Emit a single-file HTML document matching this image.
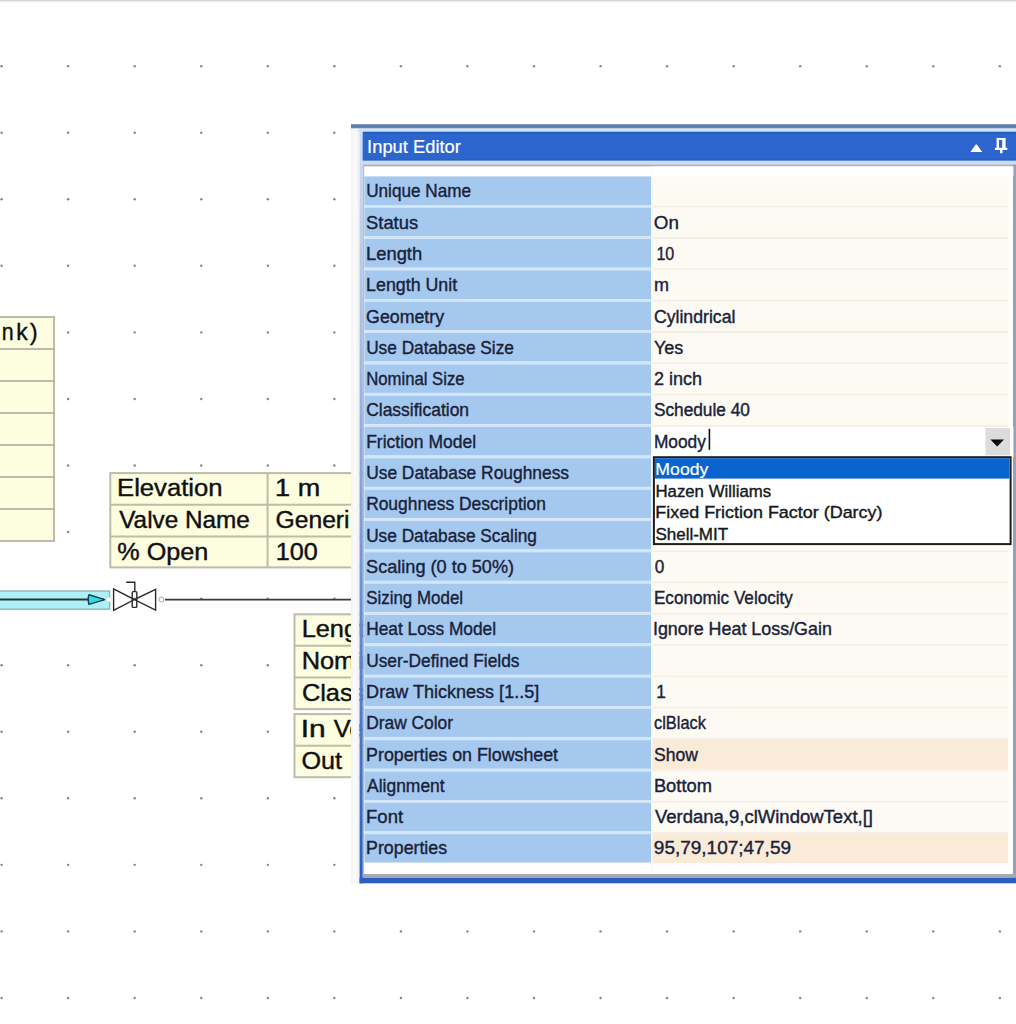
<!DOCTYPE html><html><head><meta charset="utf-8"><style>html,body{margin:0;padding:0;background:#fff;overflow:hidden;width:1016px;height:1024px}svg{display:block}text{font-family:"Liberation Sans",sans-serif}</style></head><body><svg width="1016" height="1024" viewBox="0 0 1016 1024"><rect x="0" y="0" width="1016" height="1024" fill="#ffffff"/><rect x="0" y="0" width="1016" height="1.4" fill="#d2d4d9"/><rect x="0" y="1.4" width="1016" height="1" fill="#eceef0"/><g fill="#858585"><circle cx="1.60" cy="66.14" r="1.2"/><circle cx="68.15" cy="66.14" r="1.2"/><circle cx="134.70" cy="66.14" r="1.2"/><circle cx="201.25" cy="66.14" r="1.2"/><circle cx="267.80" cy="66.14" r="1.2"/><circle cx="334.35" cy="66.14" r="1.2"/><circle cx="400.90" cy="66.14" r="1.2"/><circle cx="467.45" cy="66.14" r="1.2"/><circle cx="534.00" cy="66.14" r="1.2"/><circle cx="600.55" cy="66.14" r="1.2"/><circle cx="667.10" cy="66.14" r="1.2"/><circle cx="733.65" cy="66.14" r="1.2"/><circle cx="800.20" cy="66.14" r="1.2"/><circle cx="866.75" cy="66.14" r="1.2"/><circle cx="933.30" cy="66.14" r="1.2"/><circle cx="999.85" cy="66.14" r="1.2"/><circle cx="1.60" cy="132.70" r="1.2"/><circle cx="68.15" cy="132.70" r="1.2"/><circle cx="134.70" cy="132.70" r="1.2"/><circle cx="201.25" cy="132.70" r="1.2"/><circle cx="267.80" cy="132.70" r="1.2"/><circle cx="334.35" cy="132.70" r="1.2"/><circle cx="400.90" cy="132.70" r="1.2"/><circle cx="467.45" cy="132.70" r="1.2"/><circle cx="534.00" cy="132.70" r="1.2"/><circle cx="600.55" cy="132.70" r="1.2"/><circle cx="667.10" cy="132.70" r="1.2"/><circle cx="733.65" cy="132.70" r="1.2"/><circle cx="800.20" cy="132.70" r="1.2"/><circle cx="866.75" cy="132.70" r="1.2"/><circle cx="933.30" cy="132.70" r="1.2"/><circle cx="999.85" cy="132.70" r="1.2"/><circle cx="1.60" cy="199.26" r="1.2"/><circle cx="68.15" cy="199.26" r="1.2"/><circle cx="134.70" cy="199.26" r="1.2"/><circle cx="201.25" cy="199.26" r="1.2"/><circle cx="267.80" cy="199.26" r="1.2"/><circle cx="334.35" cy="199.26" r="1.2"/><circle cx="400.90" cy="199.26" r="1.2"/><circle cx="467.45" cy="199.26" r="1.2"/><circle cx="534.00" cy="199.26" r="1.2"/><circle cx="600.55" cy="199.26" r="1.2"/><circle cx="667.10" cy="199.26" r="1.2"/><circle cx="733.65" cy="199.26" r="1.2"/><circle cx="800.20" cy="199.26" r="1.2"/><circle cx="866.75" cy="199.26" r="1.2"/><circle cx="933.30" cy="199.26" r="1.2"/><circle cx="999.85" cy="199.26" r="1.2"/><circle cx="1.60" cy="265.82" r="1.2"/><circle cx="68.15" cy="265.82" r="1.2"/><circle cx="134.70" cy="265.82" r="1.2"/><circle cx="201.25" cy="265.82" r="1.2"/><circle cx="267.80" cy="265.82" r="1.2"/><circle cx="334.35" cy="265.82" r="1.2"/><circle cx="400.90" cy="265.82" r="1.2"/><circle cx="467.45" cy="265.82" r="1.2"/><circle cx="534.00" cy="265.82" r="1.2"/><circle cx="600.55" cy="265.82" r="1.2"/><circle cx="667.10" cy="265.82" r="1.2"/><circle cx="733.65" cy="265.82" r="1.2"/><circle cx="800.20" cy="265.82" r="1.2"/><circle cx="866.75" cy="265.82" r="1.2"/><circle cx="933.30" cy="265.82" r="1.2"/><circle cx="999.85" cy="265.82" r="1.2"/><circle cx="1.60" cy="332.38" r="1.2"/><circle cx="68.15" cy="332.38" r="1.2"/><circle cx="134.70" cy="332.38" r="1.2"/><circle cx="201.25" cy="332.38" r="1.2"/><circle cx="267.80" cy="332.38" r="1.2"/><circle cx="334.35" cy="332.38" r="1.2"/><circle cx="400.90" cy="332.38" r="1.2"/><circle cx="467.45" cy="332.38" r="1.2"/><circle cx="534.00" cy="332.38" r="1.2"/><circle cx="600.55" cy="332.38" r="1.2"/><circle cx="667.10" cy="332.38" r="1.2"/><circle cx="733.65" cy="332.38" r="1.2"/><circle cx="800.20" cy="332.38" r="1.2"/><circle cx="866.75" cy="332.38" r="1.2"/><circle cx="933.30" cy="332.38" r="1.2"/><circle cx="999.85" cy="332.38" r="1.2"/><circle cx="1.60" cy="398.94" r="1.2"/><circle cx="68.15" cy="398.94" r="1.2"/><circle cx="134.70" cy="398.94" r="1.2"/><circle cx="201.25" cy="398.94" r="1.2"/><circle cx="267.80" cy="398.94" r="1.2"/><circle cx="334.35" cy="398.94" r="1.2"/><circle cx="400.90" cy="398.94" r="1.2"/><circle cx="467.45" cy="398.94" r="1.2"/><circle cx="534.00" cy="398.94" r="1.2"/><circle cx="600.55" cy="398.94" r="1.2"/><circle cx="667.10" cy="398.94" r="1.2"/><circle cx="733.65" cy="398.94" r="1.2"/><circle cx="800.20" cy="398.94" r="1.2"/><circle cx="866.75" cy="398.94" r="1.2"/><circle cx="933.30" cy="398.94" r="1.2"/><circle cx="999.85" cy="398.94" r="1.2"/><circle cx="1.60" cy="465.50" r="1.2"/><circle cx="68.15" cy="465.50" r="1.2"/><circle cx="134.70" cy="465.50" r="1.2"/><circle cx="201.25" cy="465.50" r="1.2"/><circle cx="267.80" cy="465.50" r="1.2"/><circle cx="334.35" cy="465.50" r="1.2"/><circle cx="400.90" cy="465.50" r="1.2"/><circle cx="467.45" cy="465.50" r="1.2"/><circle cx="534.00" cy="465.50" r="1.2"/><circle cx="600.55" cy="465.50" r="1.2"/><circle cx="667.10" cy="465.50" r="1.2"/><circle cx="733.65" cy="465.50" r="1.2"/><circle cx="800.20" cy="465.50" r="1.2"/><circle cx="866.75" cy="465.50" r="1.2"/><circle cx="933.30" cy="465.50" r="1.2"/><circle cx="999.85" cy="465.50" r="1.2"/><circle cx="1.60" cy="532.06" r="1.2"/><circle cx="68.15" cy="532.06" r="1.2"/><circle cx="134.70" cy="532.06" r="1.2"/><circle cx="201.25" cy="532.06" r="1.2"/><circle cx="267.80" cy="532.06" r="1.2"/><circle cx="334.35" cy="532.06" r="1.2"/><circle cx="400.90" cy="532.06" r="1.2"/><circle cx="467.45" cy="532.06" r="1.2"/><circle cx="534.00" cy="532.06" r="1.2"/><circle cx="600.55" cy="532.06" r="1.2"/><circle cx="667.10" cy="532.06" r="1.2"/><circle cx="733.65" cy="532.06" r="1.2"/><circle cx="800.20" cy="532.06" r="1.2"/><circle cx="866.75" cy="532.06" r="1.2"/><circle cx="933.30" cy="532.06" r="1.2"/><circle cx="999.85" cy="532.06" r="1.2"/><circle cx="1.60" cy="598.62" r="1.2"/><circle cx="68.15" cy="598.62" r="1.2"/><circle cx="134.70" cy="598.62" r="1.2"/><circle cx="201.25" cy="598.62" r="1.2"/><circle cx="267.80" cy="598.62" r="1.2"/><circle cx="334.35" cy="598.62" r="1.2"/><circle cx="400.90" cy="598.62" r="1.2"/><circle cx="467.45" cy="598.62" r="1.2"/><circle cx="534.00" cy="598.62" r="1.2"/><circle cx="600.55" cy="598.62" r="1.2"/><circle cx="667.10" cy="598.62" r="1.2"/><circle cx="733.65" cy="598.62" r="1.2"/><circle cx="800.20" cy="598.62" r="1.2"/><circle cx="866.75" cy="598.62" r="1.2"/><circle cx="933.30" cy="598.62" r="1.2"/><circle cx="999.85" cy="598.62" r="1.2"/><circle cx="1.60" cy="665.18" r="1.2"/><circle cx="68.15" cy="665.18" r="1.2"/><circle cx="134.70" cy="665.18" r="1.2"/><circle cx="201.25" cy="665.18" r="1.2"/><circle cx="267.80" cy="665.18" r="1.2"/><circle cx="334.35" cy="665.18" r="1.2"/><circle cx="400.90" cy="665.18" r="1.2"/><circle cx="467.45" cy="665.18" r="1.2"/><circle cx="534.00" cy="665.18" r="1.2"/><circle cx="600.55" cy="665.18" r="1.2"/><circle cx="667.10" cy="665.18" r="1.2"/><circle cx="733.65" cy="665.18" r="1.2"/><circle cx="800.20" cy="665.18" r="1.2"/><circle cx="866.75" cy="665.18" r="1.2"/><circle cx="933.30" cy="665.18" r="1.2"/><circle cx="999.85" cy="665.18" r="1.2"/><circle cx="1.60" cy="731.74" r="1.2"/><circle cx="68.15" cy="731.74" r="1.2"/><circle cx="134.70" cy="731.74" r="1.2"/><circle cx="201.25" cy="731.74" r="1.2"/><circle cx="267.80" cy="731.74" r="1.2"/><circle cx="334.35" cy="731.74" r="1.2"/><circle cx="400.90" cy="731.74" r="1.2"/><circle cx="467.45" cy="731.74" r="1.2"/><circle cx="534.00" cy="731.74" r="1.2"/><circle cx="600.55" cy="731.74" r="1.2"/><circle cx="667.10" cy="731.74" r="1.2"/><circle cx="733.65" cy="731.74" r="1.2"/><circle cx="800.20" cy="731.74" r="1.2"/><circle cx="866.75" cy="731.74" r="1.2"/><circle cx="933.30" cy="731.74" r="1.2"/><circle cx="999.85" cy="731.74" r="1.2"/><circle cx="1.60" cy="798.30" r="1.2"/><circle cx="68.15" cy="798.30" r="1.2"/><circle cx="134.70" cy="798.30" r="1.2"/><circle cx="201.25" cy="798.30" r="1.2"/><circle cx="267.80" cy="798.30" r="1.2"/><circle cx="334.35" cy="798.30" r="1.2"/><circle cx="400.90" cy="798.30" r="1.2"/><circle cx="467.45" cy="798.30" r="1.2"/><circle cx="534.00" cy="798.30" r="1.2"/><circle cx="600.55" cy="798.30" r="1.2"/><circle cx="667.10" cy="798.30" r="1.2"/><circle cx="733.65" cy="798.30" r="1.2"/><circle cx="800.20" cy="798.30" r="1.2"/><circle cx="866.75" cy="798.30" r="1.2"/><circle cx="933.30" cy="798.30" r="1.2"/><circle cx="999.85" cy="798.30" r="1.2"/><circle cx="1.60" cy="864.86" r="1.2"/><circle cx="68.15" cy="864.86" r="1.2"/><circle cx="134.70" cy="864.86" r="1.2"/><circle cx="201.25" cy="864.86" r="1.2"/><circle cx="267.80" cy="864.86" r="1.2"/><circle cx="334.35" cy="864.86" r="1.2"/><circle cx="400.90" cy="864.86" r="1.2"/><circle cx="467.45" cy="864.86" r="1.2"/><circle cx="534.00" cy="864.86" r="1.2"/><circle cx="600.55" cy="864.86" r="1.2"/><circle cx="667.10" cy="864.86" r="1.2"/><circle cx="733.65" cy="864.86" r="1.2"/><circle cx="800.20" cy="864.86" r="1.2"/><circle cx="866.75" cy="864.86" r="1.2"/><circle cx="933.30" cy="864.86" r="1.2"/><circle cx="999.85" cy="864.86" r="1.2"/><circle cx="1.60" cy="931.42" r="1.2"/><circle cx="68.15" cy="931.42" r="1.2"/><circle cx="134.70" cy="931.42" r="1.2"/><circle cx="201.25" cy="931.42" r="1.2"/><circle cx="267.80" cy="931.42" r="1.2"/><circle cx="334.35" cy="931.42" r="1.2"/><circle cx="400.90" cy="931.42" r="1.2"/><circle cx="467.45" cy="931.42" r="1.2"/><circle cx="534.00" cy="931.42" r="1.2"/><circle cx="600.55" cy="931.42" r="1.2"/><circle cx="667.10" cy="931.42" r="1.2"/><circle cx="733.65" cy="931.42" r="1.2"/><circle cx="800.20" cy="931.42" r="1.2"/><circle cx="866.75" cy="931.42" r="1.2"/><circle cx="933.30" cy="931.42" r="1.2"/><circle cx="999.85" cy="931.42" r="1.2"/><circle cx="1.60" cy="997.98" r="1.2"/><circle cx="68.15" cy="997.98" r="1.2"/><circle cx="134.70" cy="997.98" r="1.2"/><circle cx="201.25" cy="997.98" r="1.2"/><circle cx="267.80" cy="997.98" r="1.2"/><circle cx="334.35" cy="997.98" r="1.2"/><circle cx="400.90" cy="997.98" r="1.2"/><circle cx="467.45" cy="997.98" r="1.2"/><circle cx="534.00" cy="997.98" r="1.2"/><circle cx="600.55" cy="997.98" r="1.2"/><circle cx="667.10" cy="997.98" r="1.2"/><circle cx="733.65" cy="997.98" r="1.2"/><circle cx="800.20" cy="997.98" r="1.2"/><circle cx="866.75" cy="997.98" r="1.2"/><circle cx="933.30" cy="997.98" r="1.2"/><circle cx="999.85" cy="997.98" r="1.2"/></g><rect x="-5" y="317" width="59" height="224" fill="#fdfde0" stroke="#bdbcaa" stroke-width="2"/><line x1="-5" y1="349.00" x2="54" y2="349.00" stroke="#bdbcaa" stroke-width="2"/><line x1="-5" y1="381.00" x2="54" y2="381.00" stroke="#bdbcaa" stroke-width="2"/><line x1="-5" y1="413.00" x2="54" y2="413.00" stroke="#bdbcaa" stroke-width="2"/><line x1="-5" y1="445.00" x2="54" y2="445.00" stroke="#bdbcaa" stroke-width="2"/><line x1="-5" y1="477.00" x2="54" y2="477.00" stroke="#bdbcaa" stroke-width="2"/><line x1="-5" y1="509.00" x2="54" y2="509.00" stroke="#bdbcaa" stroke-width="2"/><rect x="110.3" y="473.1" width="260" height="94.3" fill="#fdfde0" stroke="#bdbcaa" stroke-width="2"/><line x1="110.3" y1="504.8" x2="370" y2="504.8" stroke="#bdbcaa" stroke-width="2"/><line x1="110.3" y1="536.4" x2="370" y2="536.4" stroke="#bdbcaa" stroke-width="2"/><line x1="267.6" y1="473.1" x2="267.6" y2="567.4" stroke="#bdbcaa" stroke-width="2"/><rect x="294.5" y="614.3" width="80" height="94.8" fill="#fdfde0" stroke="#bdbcaa" stroke-width="2"/><line x1="294.5" y1="645.8" x2="370" y2="645.8" stroke="#bdbcaa" stroke-width="2"/><line x1="294.5" y1="677.5" x2="370" y2="677.5" stroke="#bdbcaa" stroke-width="2"/><rect x="294.5" y="714.1" width="80" height="63.1" fill="#fdfde0" stroke="#bdbcaa" stroke-width="2"/><line x1="294.5" y1="745.7" x2="370" y2="745.7" stroke="#bdbcaa" stroke-width="2"/><text transform="translate(1.79,340.10) scale(0.9091,1)" font-size="23.5" fill="#101010" stroke="#101010" stroke-width="0.4" xml:space="preserve">n</text><text transform="translate(16.13,340.10) scale(0.9727,1)" font-size="23.5" fill="#101010" stroke="#101010" stroke-width="0.4" xml:space="preserve">k</text><text transform="translate(30.10,340.10) scale(0.9714,1)" font-size="23.5" fill="#101010" stroke="#101010" stroke-width="0.4" xml:space="preserve">)</text><text transform="translate(117.02,495.70) scale(1.0925,1)" font-size="23.5" fill="#101010" stroke="#101010" stroke-width="0.4" xml:space="preserve">Elevation</text><text transform="translate(119.20,527.90) scale(1.0357,1)" font-size="23.5" fill="#101010" stroke="#101010" stroke-width="0.4" xml:space="preserve">Valve Name</text><text transform="translate(117.33,560.10) scale(1.0723,1)" font-size="23.5" fill="#101010" stroke="#101010" stroke-width="0.4" xml:space="preserve">% Open</text><text transform="translate(275.10,495.70) scale(1.1500,1)" font-size="23.5" fill="#101010" stroke="#101010" stroke-width="0.4" xml:space="preserve">1 m</text><text transform="translate(275.55,527.90) scale(1.0500,1)" font-size="23.5" fill="#101010" stroke="#101010" stroke-width="0.4" xml:space="preserve">Generi</text><text transform="translate(275.65,560.10) scale(1.0730,1)" font-size="23.5" fill="#101010" stroke="#101010" stroke-width="0.4" xml:space="preserve">100</text><text transform="translate(301.64,637.20) scale(1.0800,1)" font-size="23.5" fill="#101010" stroke="#101010" stroke-width="0.4" xml:space="preserve">Length</text><text transform="translate(301.64,669.30) scale(1.0800,1)" font-size="23.5" fill="#101010" stroke="#101010" stroke-width="0.4" xml:space="preserve">Nominal</text><text transform="translate(301.92,701.20) scale(1.0800,1)" font-size="23.5" fill="#101010" stroke="#101010" stroke-width="0.4" xml:space="preserve">Class</text><text transform="translate(300.65,737.30) scale(1.2750,1)" font-size="23.5" fill="#101010" stroke="#101010" stroke-width="0.4" xml:space="preserve">In</text><text transform="translate(333.80,737.30) scale(1.0800,1)" font-size="23.5" fill="#101010" stroke="#101010" stroke-width="0.4" xml:space="preserve">Vel</text><text transform="translate(301.53,769.20) scale(1.0703,1)" font-size="23.5" fill="#101010" stroke="#101010" stroke-width="0.4" xml:space="preserve">Out</text><rect x="-5" y="591" width="114.6" height="18.2" fill="#aef0f8" stroke="#8fb4b8" stroke-width="1.4"/><line x1="0" y1="599.6" x2="104" y2="599.6" stroke="#2a3438" stroke-width="2"/><path d="M89,594.8 C88,597 88,602 89,604.4 L104.8,599.6 Z" fill="#30dce8" stroke="#1e4048" stroke-width="1.5" stroke-linejoin="round"/><circle cx="108.6" cy="599.6" r="2.6" fill="#fff" stroke="#d0d6d6" stroke-width="0.8"/><g fill="#fff" stroke="#2a2a2a" stroke-width="1.4" stroke-linejoin="miter"><path d="M113.6,589 L113.6,610.4 L134.4,599.6 Z"/><path d="M155.6,589.4 L155.6,610.2 L134.4,599.6 Z"/><rect x="132.2" y="591.6" width="4.6" height="15.8" rx="1" fill="none"/><path d="M126.2,582.3 L134.8,582.3 L134.8,591.6" fill="none"/></g><circle cx="161.4" cy="599.6" r="2.4" fill="#fff" stroke="#bdbdbd" stroke-width="1.2"/><line x1="165" y1="599.6" x2="352" y2="599.6" stroke="#3a3a3a" stroke-width="1.8"/><defs><linearGradient id="strip" x1="0" x2="1" y1="0" y2="0"><stop offset="0" stop-color="#f2f2f2"/><stop offset="0.5" stop-color="#fbfbfb"/><stop offset="1" stop-color="#eeeef2"/></linearGradient><linearGradient id="topln" x1="0" x2="0" y1="0" y2="1"><stop offset="0" stop-color="#8aa0c0"/><stop offset="0.5" stop-color="#5572a8"/><stop offset="1" stop-color="#7d96c0"/></linearGradient><linearGradient id="lframe" gradientUnits="userSpaceOnUse" x1="0" y1="128" x2="0" y2="883"><stop offset="0" stop-color="#cfe0f6"/><stop offset="0.25" stop-color="#aac0e8"/><stop offset="0.5" stop-color="#7fa0dc"/><stop offset="0.78" stop-color="#4a7ad4"/><stop offset="1" stop-color="#2a5fc4"/></linearGradient></defs><rect x="351" y="128" width="8.6" height="756" fill="url(#strip)"/><rect x="351" y="124" width="665" height="4.6" fill="url(#topln)"/><rect x="351" y="128.6" width="8.6" height="3.2" fill="#f4f6f8"/><rect x="358.6" y="128.6" width="657.4" height="3.2" fill="#cfe4f6"/><rect x="359.6" y="128.6" width="3.2" height="754.7" fill="url(#lframe)"/><rect x="362.8" y="131.7" width="653.2" height="29.1" fill="#2159bd"/><rect x="362.8" y="133.4" width="653.2" height="26.2" fill="#2b65cd"/><rect x="362.8" y="160.8" width="653.2" height="3.7" fill="#ccdcf4"/><rect x="362.8" y="164.5" width="653.2" height="2.1" fill="#a9afbe"/><rect x="362.8" y="164.5" width="1.6" height="713.3" fill="#b4bccc"/><rect x="364.4" y="166.6" width="649" height="707.4" fill="#ffffff"/><rect x="1012.8" y="164.5" width="3.2" height="713.3" fill="#98a2b6"/><rect x="362.8" y="874" width="653.2" height="3.8" fill="#a4a9b8"/><rect x="359.6" y="877.8" width="656.4" height="5.5" fill="#2a5fc0"/><rect x="364.4" y="176.40" width="286.6" height="28.62" fill="#a5c8ef"/><rect x="364.4" y="205.02" width="286.6" height="2.7" fill="#d2e6fa"/><rect x="652.4" y="176.40" width="355.8" height="29.32" fill="#fdfaf3"/><rect x="652.4" y="205.72" width="355.8" height="2.0" fill="#f3efe7"/><rect x="364.4" y="207.72" width="286.6" height="28.62" fill="#a5c8ef"/><rect x="364.4" y="236.34" width="286.6" height="2.7" fill="#d2e6fa"/><rect x="652.4" y="207.72" width="355.8" height="29.32" fill="#fdfaf3"/><rect x="652.4" y="237.04" width="355.8" height="2.0" fill="#f3efe7"/><rect x="364.4" y="239.04" width="286.6" height="28.62" fill="#a5c8ef"/><rect x="364.4" y="267.66" width="286.6" height="2.7" fill="#d2e6fa"/><rect x="652.4" y="239.04" width="355.8" height="29.32" fill="#fdfaf3"/><rect x="652.4" y="268.36" width="355.8" height="2.0" fill="#f3efe7"/><rect x="364.4" y="270.36" width="286.6" height="28.62" fill="#a5c8ef"/><rect x="364.4" y="298.98" width="286.6" height="2.7" fill="#d2e6fa"/><rect x="652.4" y="270.36" width="355.8" height="29.32" fill="#fdfaf3"/><rect x="652.4" y="299.68" width="355.8" height="2.0" fill="#f3efe7"/><rect x="364.4" y="301.68" width="286.6" height="28.62" fill="#a5c8ef"/><rect x="364.4" y="330.30" width="286.6" height="2.7" fill="#d2e6fa"/><rect x="652.4" y="301.68" width="355.8" height="29.32" fill="#fdfaf3"/><rect x="652.4" y="331.00" width="355.8" height="2.0" fill="#f3efe7"/><rect x="364.4" y="333.00" width="286.6" height="28.62" fill="#a5c8ef"/><rect x="364.4" y="361.62" width="286.6" height="2.7" fill="#d2e6fa"/><rect x="652.4" y="333.00" width="355.8" height="29.32" fill="#fdfaf3"/><rect x="652.4" y="362.32" width="355.8" height="2.0" fill="#f3efe7"/><rect x="364.4" y="364.32" width="286.6" height="28.62" fill="#a5c8ef"/><rect x="364.4" y="392.94" width="286.6" height="2.7" fill="#d2e6fa"/><rect x="652.4" y="364.32" width="355.8" height="29.32" fill="#fdfaf3"/><rect x="652.4" y="393.64" width="355.8" height="2.0" fill="#f3efe7"/><rect x="364.4" y="395.64" width="286.6" height="28.62" fill="#a5c8ef"/><rect x="364.4" y="424.26" width="286.6" height="2.7" fill="#d2e6fa"/><rect x="652.4" y="395.64" width="355.8" height="29.32" fill="#fdfaf3"/><rect x="652.4" y="424.96" width="355.8" height="2.0" fill="#f3efe7"/><rect x="364.4" y="426.96" width="286.6" height="28.62" fill="#a5c8ef"/><rect x="364.4" y="455.58" width="286.6" height="2.7" fill="#d2e6fa"/><rect x="652.4" y="426.96" width="355.8" height="29.32" fill="#fdfaf3"/><rect x="652.4" y="456.28" width="355.8" height="2.0" fill="#f3efe7"/><rect x="364.4" y="458.28" width="286.6" height="28.62" fill="#a5c8ef"/><rect x="364.4" y="486.90" width="286.6" height="2.7" fill="#d2e6fa"/><rect x="652.4" y="458.28" width="355.8" height="29.32" fill="#fdfaf3"/><rect x="652.4" y="487.60" width="355.8" height="2.0" fill="#f3efe7"/><rect x="364.4" y="489.60" width="286.6" height="28.62" fill="#a5c8ef"/><rect x="364.4" y="518.22" width="286.6" height="2.7" fill="#d2e6fa"/><rect x="652.4" y="489.60" width="355.8" height="29.32" fill="#fdfaf3"/><rect x="652.4" y="518.92" width="355.8" height="2.0" fill="#f3efe7"/><rect x="364.4" y="520.92" width="286.6" height="28.62" fill="#a5c8ef"/><rect x="364.4" y="549.54" width="286.6" height="2.7" fill="#d2e6fa"/><rect x="652.4" y="520.92" width="355.8" height="29.32" fill="#fdfaf3"/><rect x="652.4" y="550.24" width="355.8" height="2.0" fill="#f3efe7"/><rect x="364.4" y="552.24" width="286.6" height="28.62" fill="#a5c8ef"/><rect x="364.4" y="580.86" width="286.6" height="2.7" fill="#d2e6fa"/><rect x="652.4" y="552.24" width="355.8" height="29.32" fill="#fdfaf3"/><rect x="652.4" y="581.56" width="355.8" height="2.0" fill="#f3efe7"/><rect x="364.4" y="583.56" width="286.6" height="28.62" fill="#a5c8ef"/><rect x="364.4" y="612.18" width="286.6" height="2.7" fill="#d2e6fa"/><rect x="652.4" y="583.56" width="355.8" height="29.32" fill="#fdfaf3"/><rect x="652.4" y="612.88" width="355.8" height="2.0" fill="#f3efe7"/><rect x="364.4" y="614.88" width="286.6" height="28.62" fill="#a5c8ef"/><rect x="364.4" y="643.50" width="286.6" height="2.7" fill="#d2e6fa"/><rect x="652.4" y="614.88" width="355.8" height="29.32" fill="#fdfaf3"/><rect x="652.4" y="644.20" width="355.8" height="2.0" fill="#f3efe7"/><rect x="364.4" y="646.20" width="286.6" height="28.62" fill="#a5c8ef"/><rect x="364.4" y="674.82" width="286.6" height="2.7" fill="#d2e6fa"/><rect x="652.4" y="646.20" width="355.8" height="29.32" fill="#fdfaf3"/><rect x="652.4" y="675.52" width="355.8" height="2.0" fill="#f3efe7"/><rect x="364.4" y="677.52" width="286.6" height="28.62" fill="#a5c8ef"/><rect x="364.4" y="706.14" width="286.6" height="2.7" fill="#d2e6fa"/><rect x="652.4" y="677.52" width="355.8" height="29.32" fill="#fdfaf3"/><rect x="652.4" y="706.84" width="355.8" height="2.0" fill="#f3efe7"/><rect x="364.4" y="708.84" width="286.6" height="28.62" fill="#a5c8ef"/><rect x="364.4" y="737.46" width="286.6" height="2.7" fill="#d2e6fa"/><rect x="652.4" y="708.84" width="355.8" height="29.32" fill="#fdfaf3"/><rect x="652.4" y="738.16" width="355.8" height="2.0" fill="#f3efe7"/><rect x="364.4" y="740.16" width="286.6" height="28.62" fill="#a5c8ef"/><rect x="364.4" y="768.78" width="286.6" height="2.7" fill="#d2e6fa"/><rect x="652.4" y="740.16" width="355.8" height="29.32" fill="#faead8"/><rect x="652.4" y="769.48" width="355.8" height="2.0" fill="#f3efe7"/><rect x="364.4" y="771.48" width="286.6" height="28.62" fill="#a5c8ef"/><rect x="364.4" y="800.10" width="286.6" height="2.7" fill="#d2e6fa"/><rect x="652.4" y="771.48" width="355.8" height="29.32" fill="#fdfaf3"/><rect x="652.4" y="800.80" width="355.8" height="2.0" fill="#f3efe7"/><rect x="364.4" y="802.80" width="286.6" height="28.62" fill="#a5c8ef"/><rect x="364.4" y="831.42" width="286.6" height="2.7" fill="#d2e6fa"/><rect x="652.4" y="802.80" width="355.8" height="29.32" fill="#fdfaf3"/><rect x="652.4" y="832.12" width="355.8" height="2.0" fill="#f3efe7"/><rect x="364.4" y="834.12" width="286.6" height="28.62" fill="#a5c8ef"/><rect x="364.4" y="862.74" width="286.6" height="2.7" fill="#ffffff"/><rect x="652.4" y="834.12" width="355.8" height="29.32" fill="#faead8"/><rect x="652.4" y="863.44" width="355.8" height="2.0" fill="#ffffff"/><rect x="1008.2" y="166.6" width="4.6" height="707.4" fill="#fefdf8"/><rect x="651" y="166.6" width="1.4" height="707.4" fill="#f6f8fc"/><rect x="652.4" y="166.6" width="361" height="9.8" fill="#ffffff"/><rect x="652.4" y="426.96" width="361" height="30.32" fill="#ffffff"/><rect x="985.5" y="428" width="24.6" height="27.3" fill="#dcdcdc"/><path d="M990.4,439.6 L1004,439.6 L997.2,446.6 Z" fill="#000"/><rect x="708.6" y="428.8" width="1.6" height="21" fill="#111"/><rect x="653.9" y="457.2" width="356.7" height="86.9" fill="#ffffff" stroke="#1e1e1e" stroke-width="2"/><rect x="654.9" y="458.2" width="354.7" height="20.4" fill="#0a64d0"/><text transform="translate(366.15,197.40) scale(0.9537,1)" font-size="18" fill="#18223a" stroke="#18223a" stroke-width="0.38" xml:space="preserve">Unique Name</text><text transform="translate(366.08,228.69) scale(1.0200,1)" font-size="18" fill="#18223a" stroke="#18223a" stroke-width="0.38" xml:space="preserve">Status</text><text transform="translate(653.85,228.69) scale(1.0455,1)" font-size="18" fill="#18223a" stroke="#18223a" stroke-width="0.38" xml:space="preserve">On</text><text transform="translate(366.08,259.97) scale(1.0189,1)" font-size="18" fill="#18223a" stroke="#18223a" stroke-width="0.38" xml:space="preserve">Length</text><text transform="translate(656.41,259.97) scale(0.8947,1)" font-size="18" fill="#18223a" stroke="#18223a" stroke-width="0.38" xml:space="preserve">10</text><text transform="translate(366.11,291.26) scale(0.9890,1)" font-size="18" fill="#18223a" stroke="#18223a" stroke-width="0.38" xml:space="preserve">Length Unit</text><text transform="translate(653.90,291.26) scale(1.0000,1)" font-size="18" fill="#18223a" stroke="#18223a" stroke-width="0.38" xml:space="preserve">m</text><text transform="translate(366.11,322.54) scale(0.9872,1)" font-size="18" fill="#18223a" stroke="#18223a" stroke-width="0.38" xml:space="preserve">Geometry</text><text transform="translate(653.92,322.54) scale(0.9815,1)" font-size="18" fill="#18223a" stroke="#18223a" stroke-width="0.38" xml:space="preserve">Cylindrical</text><text transform="translate(366.14,353.83) scale(0.9605,1)" font-size="18" fill="#18223a" stroke="#18223a" stroke-width="0.38" xml:space="preserve">Use Database Size</text><text transform="translate(653.90,353.83) scale(1.0000,1)" font-size="18" fill="#18223a" stroke="#18223a" stroke-width="0.38" xml:space="preserve">Yes</text><text transform="translate(366.17,385.12) scale(0.9279,1)" font-size="18" fill="#18223a" stroke="#18223a" stroke-width="0.38" xml:space="preserve">Nominal Size</text><text transform="translate(653.90,385.12) scale(1.0000,1)" font-size="18" fill="#18223a" stroke="#18223a" stroke-width="0.38" xml:space="preserve">2 inch</text><text transform="translate(366.13,416.40) scale(0.9712,1)" font-size="18" fill="#18223a" stroke="#18223a" stroke-width="0.38" xml:space="preserve">Classification</text><text transform="translate(653.94,416.40) scale(0.9596,1)" font-size="18" fill="#18223a" stroke="#18223a" stroke-width="0.38" xml:space="preserve">Schedule 40</text><text transform="translate(366.13,447.69) scale(0.9730,1)" font-size="18" fill="#18223a" stroke="#18223a" stroke-width="0.38" xml:space="preserve">Friction Model</text><text transform="translate(653.94,447.69) scale(0.9623,1)" font-size="18" fill="#18223a" stroke="#18223a" stroke-width="0.38" xml:space="preserve">Moody</text><text transform="translate(366.13,478.97) scale(0.9665,1)" font-size="18" fill="#18223a" stroke="#18223a" stroke-width="0.38" xml:space="preserve">Use Database Roughness</text><text transform="translate(366.13,510.26) scale(0.9674,1)" font-size="18" fill="#18223a" stroke="#18223a" stroke-width="0.38" xml:space="preserve">Roughness Description</text><text transform="translate(366.14,541.55) scale(0.9602,1)" font-size="18" fill="#18223a" stroke="#18223a" stroke-width="0.38" xml:space="preserve">Use Database Scaling</text><text transform="translate(366.09,572.83) scale(1.0069,1)" font-size="18" fill="#18223a" stroke="#18223a" stroke-width="0.38" xml:space="preserve">Scaling (0 to 50%)</text><text transform="translate(654.64,572.83) scale(0.9550,1)" font-size="18" fill="#18223a" stroke="#18223a" stroke-width="0.38" xml:space="preserve">0</text><text transform="translate(366.16,604.12) scale(0.9406,1)" font-size="18" fill="#18223a" stroke="#18223a" stroke-width="0.38" xml:space="preserve">Sizing Model</text><text transform="translate(653.95,604.12) scale(0.9517,1)" font-size="18" fill="#18223a" stroke="#18223a" stroke-width="0.38" xml:space="preserve">Economic Velocity</text><text transform="translate(366.14,635.40) scale(0.9624,1)" font-size="18" fill="#18223a" stroke="#18223a" stroke-width="0.38" xml:space="preserve">Heat Loss Model</text><text transform="translate(652.91,635.40) scale(0.9944,1)" font-size="18" fill="#18223a" stroke="#18223a" stroke-width="0.38" xml:space="preserve">Ignore Heat Loss/Gain</text><text transform="translate(366.13,666.69) scale(0.9652,1)" font-size="18" fill="#18223a" stroke="#18223a" stroke-width="0.38" xml:space="preserve">User-Defined Fields</text><text transform="translate(366.10,697.98) scale(1.0029,1)" font-size="18" fill="#18223a" stroke="#18223a" stroke-width="0.38" xml:space="preserve">Draw Thickness [1..5]</text><text transform="translate(656.34,697.98) scale(0.9550,1)" font-size="18" fill="#18223a" stroke="#18223a" stroke-width="0.38" xml:space="preserve">1</text><text transform="translate(366.13,729.26) scale(0.9663,1)" font-size="18" fill="#18223a" stroke="#18223a" stroke-width="0.38" xml:space="preserve">Draw Color</text><text transform="translate(653.99,729.26) scale(0.9107,1)" font-size="18" fill="#18223a" stroke="#18223a" stroke-width="0.38" xml:space="preserve">clBlack</text><text transform="translate(366.11,760.55) scale(0.9896,1)" font-size="18" fill="#18223a" stroke="#18223a" stroke-width="0.38" xml:space="preserve">Properties on Flowsheet</text><text transform="translate(653.92,760.55) scale(0.9773,1)" font-size="18" fill="#18223a" stroke="#18223a" stroke-width="0.38" xml:space="preserve">Show</text><text transform="translate(367.10,791.83) scale(0.9688,1)" font-size="18" fill="#18223a" stroke="#18223a" stroke-width="0.38" xml:space="preserve">Alignment</text><text transform="translate(653.88,791.83) scale(1.0182,1)" font-size="18" fill="#18223a" stroke="#18223a" stroke-width="0.38" xml:space="preserve">Bottom</text><text transform="translate(366.07,823.12) scale(1.0286,1)" font-size="18" fill="#18223a" stroke="#18223a" stroke-width="0.38" xml:space="preserve">Font</text><text transform="translate(654.90,823.12) scale(1.0284,1)" font-size="18" fill="#18223a" stroke="#18223a" stroke-width="0.38" xml:space="preserve">Verdana,9,clWindowText,[]</text><text transform="translate(366.11,854.41) scale(0.9877,1)" font-size="18" fill="#18223a" stroke="#18223a" stroke-width="0.38" xml:space="preserve">Properties</text><text transform="translate(653.85,854.41) scale(1.0547,1)" font-size="18" fill="#18223a" stroke="#18223a" stroke-width="0.38" xml:space="preserve">95,79,107;47,59</text><text transform="translate(367.11,152.80) scale(1.0432,1)" font-size="17.6" fill="#ffffff" stroke="#ffffff" stroke-width="0.2" xml:space="preserve">Input Editor</text><text transform="translate(655.36,475.40) scale(1.0400,1)" font-size="17" fill="#ffffff" stroke="#ffffff" stroke-width="0.2" xml:space="preserve">Moody</text><text transform="translate(655.41,496.60) scale(0.9888,1)" font-size="17" fill="#141820" stroke="#141820" stroke-width="0.38" xml:space="preserve">Hazen Williams</text><text transform="translate(655.35,518.20) scale(1.0547,1)" font-size="17" fill="#141820" stroke="#141820" stroke-width="0.38" xml:space="preserve">Fixed Friction Factor (Darcy)</text><text transform="translate(655.40,539.70) scale(1.0000,1)" font-size="17" fill="#141820" stroke="#141820" stroke-width="0.38" xml:space="preserve">Shell-MIT</text><path d="M970.4,151.9 L982.2,151.9 L976.9,144.5 L975.7,144.5 Z" fill="#fff"/><path d="M996.6,137.9 L1005.6,137.9 L1005.6,147.7 L1007.3,147.7 L1007.3,150.1 L1002.5,150.1 L1002.5,153.3 L1000,153.3 L1000,150.1 L994.9,150.1 L994.9,147.7 L996.6,147.7 Z M999,140.1 L999,147.7 L1002.2,147.7 L1002.2,140.1 Z" fill="#fff" fill-rule="evenodd"/></svg></body></html>
